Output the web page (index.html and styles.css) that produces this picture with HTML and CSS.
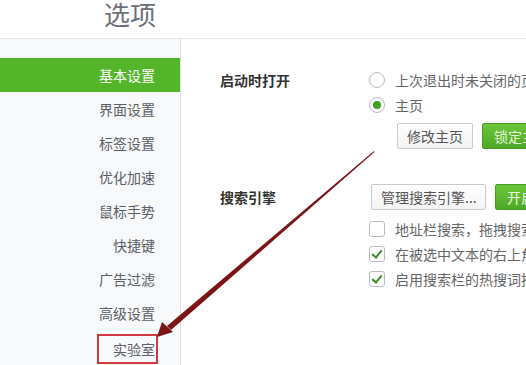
FILE: index.html
```html
<!DOCTYPE html>
<html lang="zh-CN">
<head>
    <meta charset="UTF-8">
    <title>选项</title>
    <link rel="stylesheet" href="styles.css">
</head>
<body>
    <div class="page">
        <div class="header">
            <h1>选项</h1>
        </div>

        <div class="main">
            <ul class="sidebar">
                <li class="nav-item active">基本设置</li>
                <li class="nav-item">界面设置</li>
                <li class="nav-item">标签设置</li>
                <li class="nav-item">优化加速</li>
                <li class="nav-item">鼠标手势</li>
                <li class="nav-item">快捷键</li>
                <li class="nav-item">广告过滤</li>
                <li class="nav-item">高级设置</li>
                <li class="nav-item"><span class="highlight">实验室</span></li>
            </ul>

            <div class="content">
                <div class="section section-startup">
                    <div class="section-title">启动时打开</div>
                    <div class="section-body">
                        <div class="option"><span class="radio"></span>上次退出时未关闭的页面</div>
                        <div class="option"><span class="radio checked"></span>主页</div>
                        <div class="btn-row">
                            <button class="btn">修改主页</button>
                            <button class="btn btn-green">锁定主页</button>
                        </div>
                    </div>
                </div>

                <div class="section section-search">
                    <div class="section-title">搜索引擎</div>
                    <div class="section-body">
                        <div class="btn-row">
                            <button class="btn btn-wide">管理搜索引擎...</button>
                            <button class="btn btn-green">开启</button>
                        </div>
                        <div class="option"><span class="checkbox"></span>地址栏搜索，拖拽搜索</div>
                        <div class="option"><span class="checkbox checked"></span>在被选中文本的右上角</div>
                        <div class="option"><span class="checkbox checked"></span>启用搜索栏的热搜词推荐</div>
                    </div>
                </div>
            </div>
        </div>

        <!-- annotation arrow drawn over the page -->
        <svg class="arrow" width="526" height="365" viewBox="0 0 526 365">
            <polygon points="374,151 374.5,152 171,330 167,326" fill="#7a1416"/>
            <polygon points="157,337 162,322 173,332" fill="#7a1416"/>
        </svg>
    </div>
</body>
</html>
```

FILE: styles.css
```css
* {
    margin: 0;
    padding: 0;
    box-sizing: border-box;
}

body {
    font-family: "Noto Sans CJK SC", "Noto Sans", sans-serif;
    background: #fff;
    color: #333;
    overflow: hidden;
}

.page {
    position: relative;
    width: 526px;
    height: 365px;
    overflow: hidden;
}

.header {
    height: 39px;
    border-bottom: 1px solid #e6e8ea;
    padding-left: 104px;
}

.header h1 {
    font-size: 26px;
    font-weight: normal;
    line-height: 28px;
    color: #6b7178;
}

.main {
    display: flex;
    height: 326px;
}

.sidebar {
    list-style: none;
    width: 181px;
    flex-shrink: 0;
    background: #f8f9fa;
    border-right: 1px solid #dcdfe2;
    padding-top: 19px;
}

.nav-item {
    height: 34px;
    line-height: 34px;
    font-size: 14px;
    color: #5a6067;
    text-align: right;
    padding-right: 25px;
}

.nav-item.active {
    background: #55b52a;
    color: #fff;
}

.highlight {
    display: inline-block;
    line-height: 26px;
    padding: 0 1px 0 14px;
    margin: 4px -3px 0 0;
    border: 2px solid #d0393f;
    vertical-align: top;
}

.content {
    flex: 1;
    padding: 28px 0 0 39px;
    min-width: 0;
}

.section {
    display: grid;
    grid-template-columns: 149px 1fr;
}

.section-search {
    margin-top: 35px;
}

.section-title {
    font-size: 14px;
    font-weight: bold;
    color: #333;
    line-height: 26px;
}

.section-body {
    white-space: nowrap;
}

.option {
    display: flex;
    align-items: center;
    height: 25px;
    font-size: 14px;
    color: #666;
}

.radio {
    width: 16px;
    height: 16px;
    border: 1px solid #b9bdc1;
    border-radius: 50%;
    background: #fff;
    margin-right: 10px;
    position: relative;
}

.radio.checked::after {
    content: "";
    position: absolute;
    left: 3px;
    top: 3px;
    width: 8px;
    height: 8px;
    border-radius: 50%;
    background: #3f9e1e;
}

.checkbox {
    width: 16px;
    height: 16px;
    border: 1px solid #b9bdc1;
    border-radius: 3px;
    background: #fff;
    margin-right: 10px;
    position: relative;
}

.checkbox.checked::after {
    content: "";
    position: absolute;
    left: 4px;
    top: 1px;
    width: 4px;
    height: 8px;
    border: solid #3a8f1e;
    border-width: 0 2px 2px 0;
    transform: rotate(40deg);
}

.btn-row {
    display: flex;
    gap: 9px;
    margin: 6px 0 0 28px;
}

.section-search .btn-row {
    margin: 0 0 6px 2px;
}

.btn {
    height: 26px;
    padding: 0 9px;
    font-family: inherit;
    font-size: 14px;
    color: #555;
    background: linear-gradient(#fff, #f3f3f3);
    border: 1px solid #c8cbce;
    border-radius: 2px;
    white-space: nowrap;
}

.btn-wide {
    width: 115px;
}

.btn-green {
    color: #e8f7dc;
    background: linear-gradient(#6cc63a, #4fa826);
    border-color: #4a9d24;
    width: 80px;
    padding: 0 11px;
    text-align: left;
}

.arrow {
    position: absolute;
    left: 0;
    top: 0;
    pointer-events: none;
}
```
